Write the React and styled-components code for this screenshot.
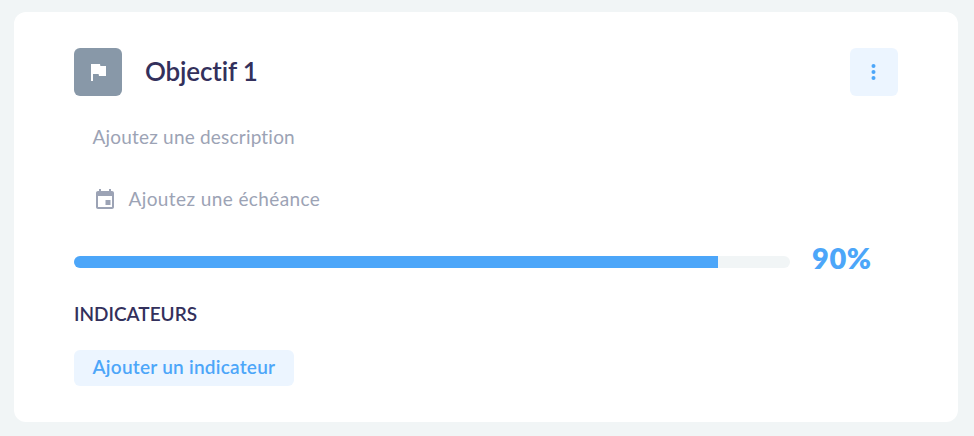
import React from 'react';
import styled, { createGlobalStyle } from 'styled-components';

const GlobalStyle = createGlobalStyle`
  * {
    box-sizing: border-box;
  }
  body {
    margin: 0;
    background: #f1f5f6;
    font-family: Lato, 'Liberation Sans', sans-serif;
    font-variant-ligatures: none;
  }
  button {
    border: 0;
    padding: 0;
    font-family: inherit;
    font-variant-ligatures: inherit;
    cursor: pointer;
  }
`;

export default function App() {
    const progress = 90;

    return (
        <>
            <GlobalStyle />
            <Page>
                <Card>
                    <Header>
                        <FlagBox>
                            <svg width="24" height="24" viewBox="0 0 24 24" fill="currentColor">
                                <path d="M14.4 6 14 4H5v17h2v-7h5.6l.4 2h7V6z" />
                            </svg>
                        </FlagBox>
                        <Title>Objectif 1</Title>
                        <MenuButton aria-label="Options">
                            <svg width="24" height="24" viewBox="0 0 24 24" fill="currentColor">
                                <circle cx="11.5" cy="6" r="2" />
                                <circle cx="11.5" cy="12" r="2" />
                                <circle cx="11.5" cy="18" r="2" />
                            </svg>
                        </MenuButton>
                    </Header>
                    <Field $top={28}>
                        <Placeholder $spacing={0.2}>Ajoutez une description</Placeholder>
                    </Field>
                    <Field $top={34}>
                        <svg width="24" height="24" viewBox="0 0 24 24" fill="currentColor">
                            <path d="M17.5 12h-5v5h5v-5zM16 1v2H8V1H6v2H5c-1.11 0-2 .9-2 2v14c0 1.1.89 2 2 2h14c1.1 0 2-.9 2-2V5c0-1.1-.9-2-2-2h-1V1h-2zm3 18H5V8h14v11z" />
                        </svg>
                        <Placeholder $spacing={0.4}>Ajoutez une échéance</Placeholder>
                    </Field>
                    <Progress>
                        <Track>
                            <Bar style={{ width: `${progress}%` }} />
                        </Track>
                        <Percent>{progress}%</Percent>
                    </Progress>
                    <Subtitle>Indicateurs</Subtitle>
                    <AddButton>Ajouter un indicateur</AddButton>
                </Card>
            </Page>
        </>
    )
}

const Page = styled.div`
  height: 436px;
  padding: 12px 16px 14px 14px;
`;

const Card = styled.section`
  height: 100%;
  padding: 36px 60px;
  border-radius: 12px;
  background: #fff;
`;

const Header = styled.header`
  display: flex;
  align-items: center;
  height: 48px;
`;

const FlagBox = styled.div`
  display: flex;
  align-items: center;
  justify-content: center;
  width: 48px;
  height: 48px;
  border-radius: 6px;
  background: #8898a8;
  color: #fff;
`;

const Title = styled.h1`
  flex: 1;
  margin: 0 0 2px 23px;
  font-size: 26px;
  font-weight: 600;
  line-height: 32px;
  letter-spacing: -0.15px;
  color: #33305c;
`;

const MenuButton = styled.button`
  display: flex;
  align-items: center;
  justify-content: center;
  width: 48px;
  height: 48px;
  border-radius: 6px;
  background: #ecf5ff;
  color: #4ca6f9;
`;

const Field = styled.div`
  display: flex;
  align-items: center;
  gap: 12px;
  height: 28px;
  margin-top: ${({ $top }) => $top}px;
  padding-left: 18.5px;
  color: #9ca3b5;
`;

const Placeholder = styled.span`
  padding-bottom: 3px;
  font-size: 19px;
  letter-spacing: ${({ $spacing }) => $spacing}px;
`;

const Progress = styled.div`
  display: flex;
  align-items: center;
  height: 36px;
  margin-top: 30px;
`;

const Track = styled.div`
  width: 716px;
  height: 12px;
  border-radius: 6px;
  overflow: hidden;
  background: #f1f5f6;
`;

const Bar = styled.div`
  height: 100%;
  background: #4ca6f9;
`;

const Percent = styled.strong`
  margin: -9px 0 0 22px;
  font-size: 29px;
  font-weight: 800;
  line-height: 36px;
  letter-spacing: 0.6px;
  color: #4ca6f9;
`;

const Subtitle = styled.h2`
  margin: 22px 0 24px;
  font-size: 19px;
  font-weight: 600;
  line-height: 24px;
  text-transform: uppercase;
  color: #33305c;
`;

const AddButton = styled.button`
  width: 220px;
  height: 36px;
  padding-bottom: 3px;
  border-radius: 6px;
  background: #ecf5ff;
  font-size: 19px;
  font-weight: 600;
  letter-spacing: 0.25px;
  color: #4ca6f9;
`;
